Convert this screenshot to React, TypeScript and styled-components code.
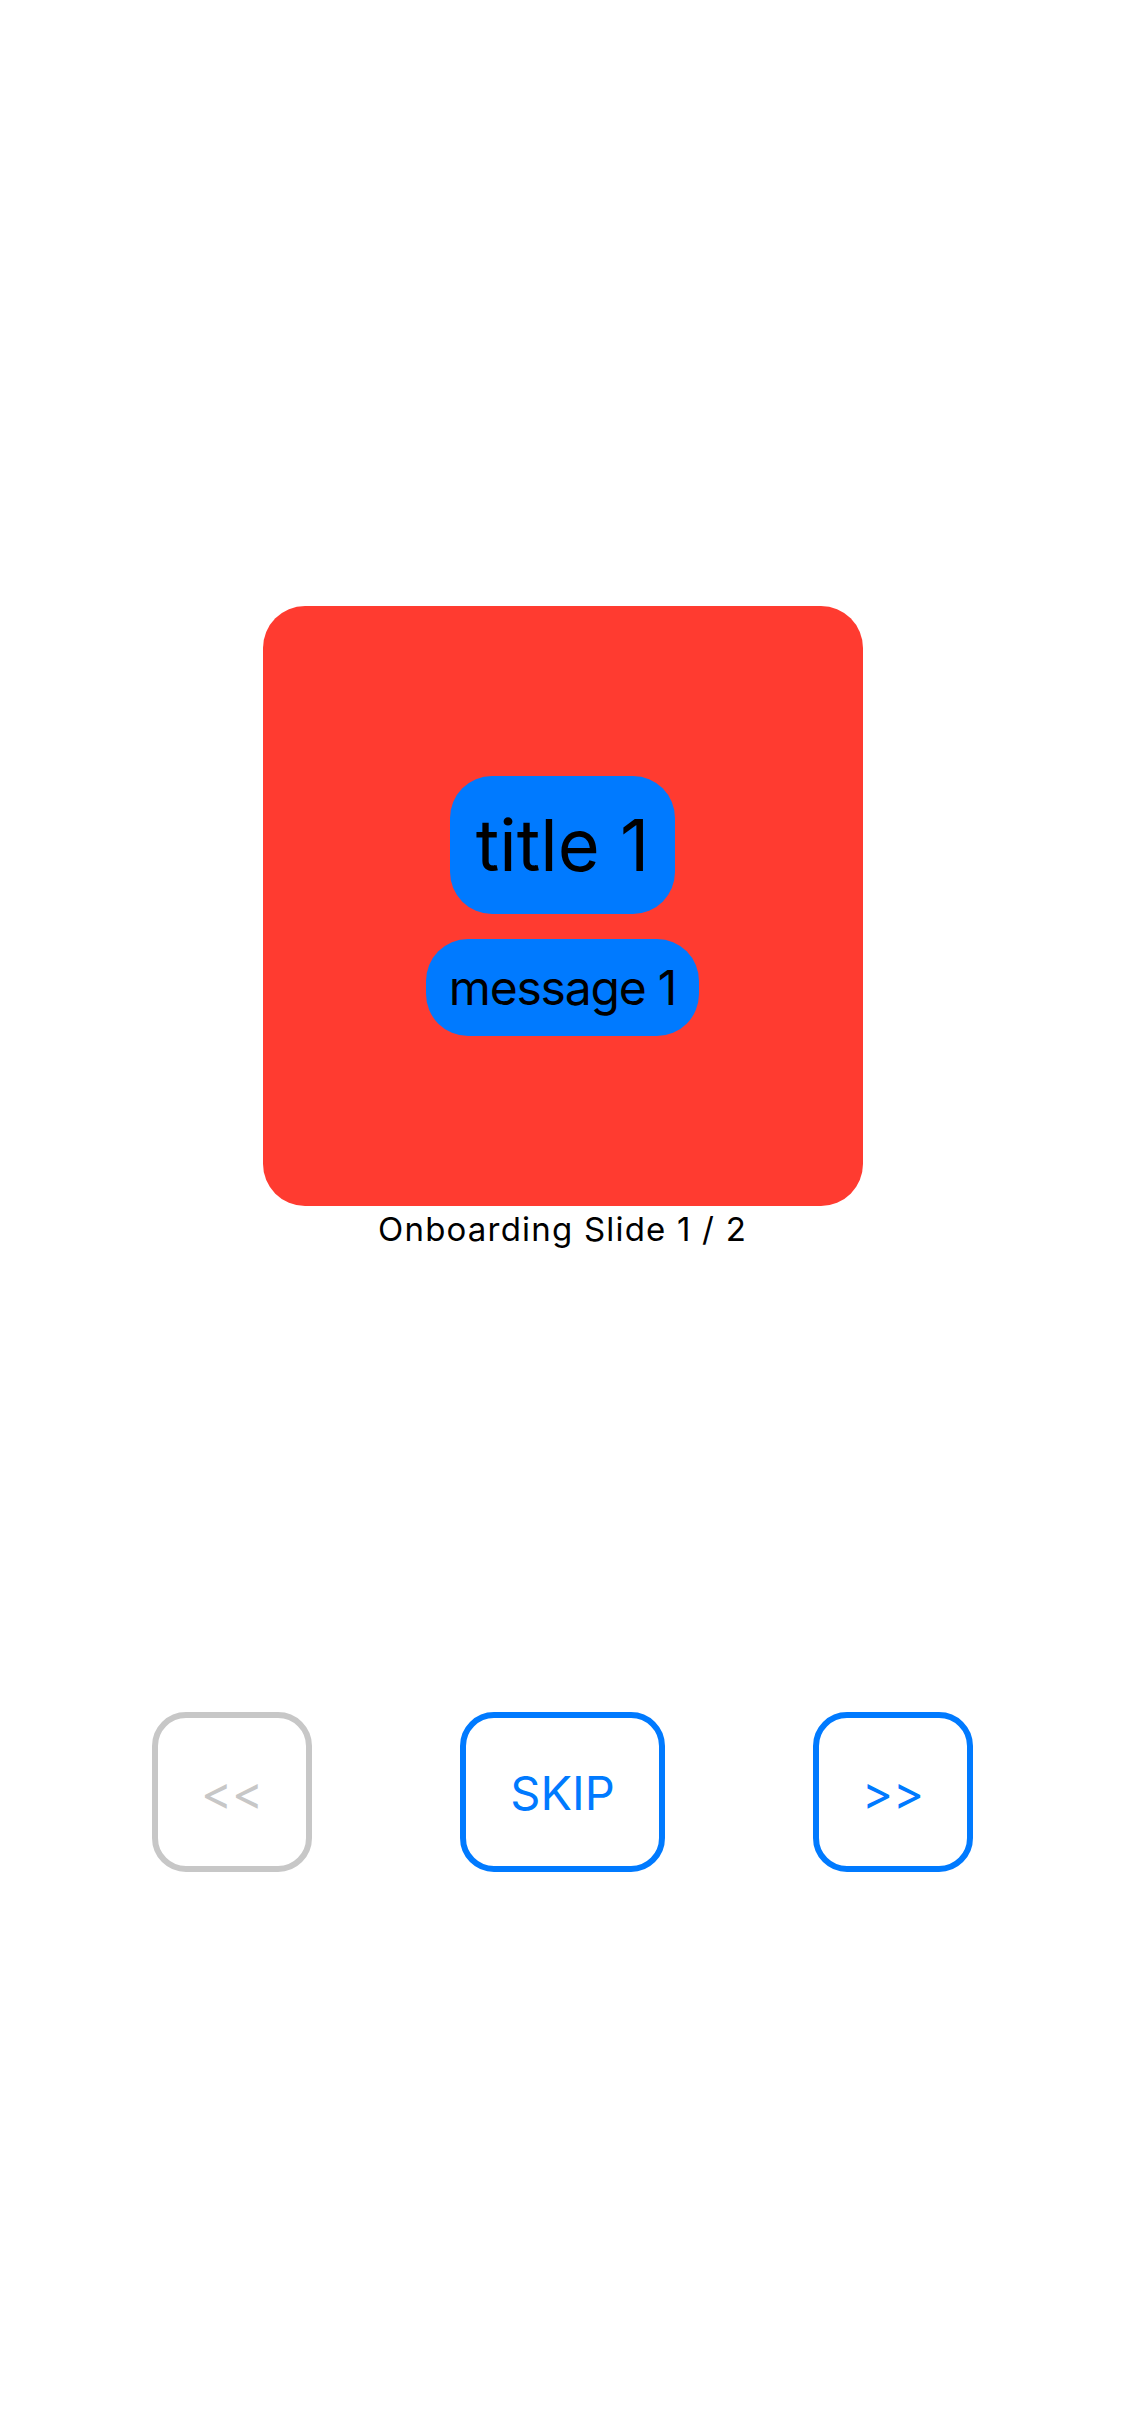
import React from "react";
import styled, { createGlobalStyle } from "styled-components";

const GlobalStyle = createGlobalStyle`
  html, body {
    margin: 0;
    padding: 0;
    background: #ffffff;
  }
  body {
    font-family: Inter, "Noto Sans", "Liberation Sans", sans-serif;
    -webkit-font-smoothing: antialiased;
  }
`;

const Page = styled.div`
  width: 1125px;
  min-height: 2436px;
  display: flex;
  flex-direction: column;
  align-items: center;
  padding-top: 606px;
  box-sizing: border-box;
  background: #ffffff;
`;

const Slide = styled.section`
  display: flex;
  flex-direction: column;
  align-items: center;
`;

const Card = styled.div`
  width: 600px;
  height: 600px;
  border-radius: 42px;
  background: #ff3b30;
  display: flex;
  flex-direction: column;
  align-items: center;
  justify-content: center;
  gap: 25px;
`;

const Pill = styled.div<{ $size: number; $padV: number; $padH: number; $track: number }>`
  background: #007aff;
  color: #000000;
  border-radius: 42px;
  font-size: ${(p) => p.$size}px;
  letter-spacing: ${(p) => p.$track}px;
  line-height: 1.2;
  padding: ${(p) => p.$padV}px ${(p) => p.$padH}px;
  white-space: nowrap;
`;

const Caption = styled.div`
  font-size: 33px;
  line-height: 1.4;
  color: #000000;
  letter-spacing: 1.2px;
`;

const ButtonRow = styled.nav`
  width: 100%;
  box-sizing: border-box;
  margin-top: 460px;
  padding: 0 152px;
  display: flex;
  justify-content: space-between;
  align-items: center;
`;

const NavButton = styled.button<{ $disabled?: boolean; $wide?: boolean }>`
  width: ${(p) => (p.$wide ? 205 : 160)}px;
  height: 160px;
  box-sizing: border-box;
  border: 6px solid ${(p) => (p.$disabled ? "#c7c7c7" : "#007aff")};
  border-radius: 34px;
  background: #ffffff;
  color: ${(p) => (p.$disabled ? "#c7c7c7" : "#007aff")};
  font-family: Inter, "Noto Sans", "Liberation Sans", sans-serif;
  font-size: 47px;
  display: flex;
  align-items: center;
  justify-content: center;
  padding: 0;
  cursor: pointer;
`;

export default function App() {
  return (
    <>
      <GlobalStyle />
      <Page>
        <Slide>
          <Card>
            <Pill $size={72} $padV={26} $padH={26} $track={0}>title 1</Pill>
            <Pill $size={48} $padV={20} $padH={23} $track={-1.2}>message 1</Pill>
          </Card>
          <Caption>Onboarding Slide 1 / 2</Caption>
        </Slide>
        <ButtonRow>
          <NavButton $disabled>&lt;&lt;</NavButton>
          <NavButton $wide>SKIP</NavButton>
          <NavButton>&gt;&gt;</NavButton>
        </ButtonRow>
      </Page>
    </>
  );
}
